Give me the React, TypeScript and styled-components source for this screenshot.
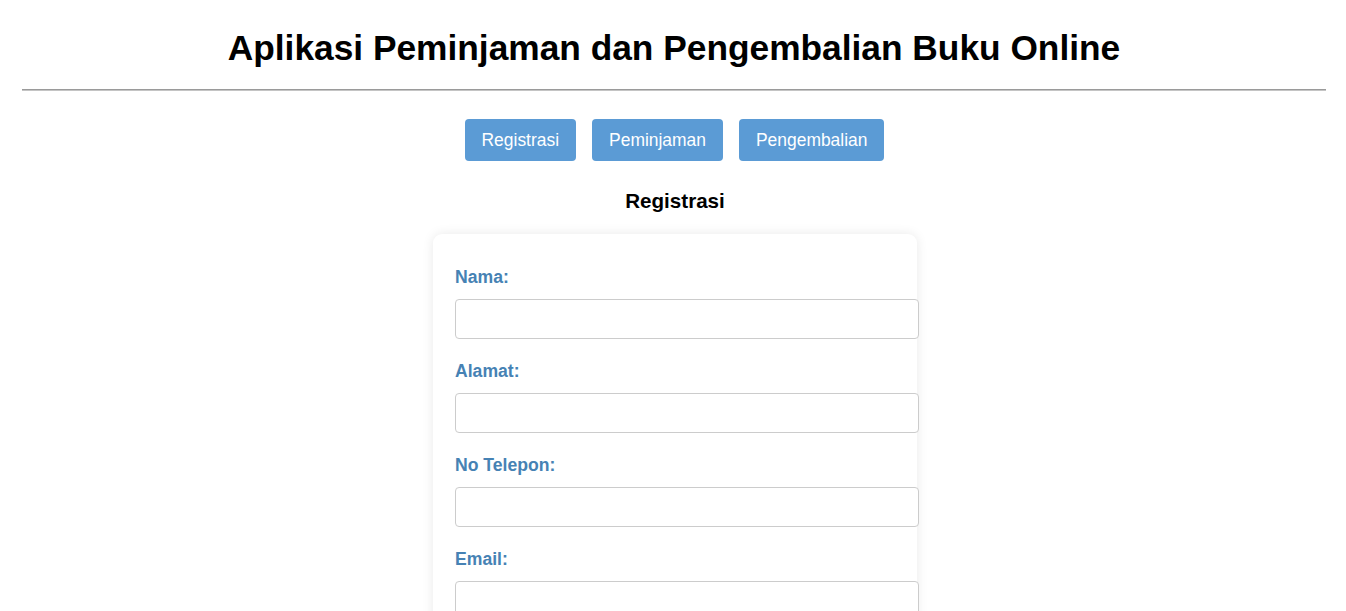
import styled, { createGlobalStyle } from "styled-components";

const GlobalStyle = createGlobalStyle`
  body {
    margin: 0;
    font-family: "Liberation Sans", Arial, sans-serif;
    background: #ffffff;
    color: #000000;
  }
`;

const tabs = ["Registrasi", "Peminjaman", "Pengembalian"];
const fields = [
  { id: "nama", label: "Nama:", type: "text" },
  { id: "alamat", label: "Alamat:", type: "text" },
  { id: "telepon", label: "No Telepon:", type: "tel" },
  { id: "email", label: "Email:", type: "email" },
];

export default function App() {
  return (
    <>
      <GlobalStyle />
      <Page>
        <Title>Aplikasi Peminjaman dan Pengembalian Buku Online</Title>
        <Divider />
        <Nav>
          {tabs.map((tab) => (
            <NavButton key={tab} type="button">
              {tab}
            </NavButton>
          ))}
        </Nav>
        <SectionTitle>Registrasi</SectionTitle>
        <Card>
          <form onSubmit={(e) => e.preventDefault()}>
            {fields.map((field) => (
              <Field key={field.id}>
                <Label htmlFor={field.id}>{field.label}</Label>
                <Input id={field.id} type={field.type} />
              </Field>
            ))}
            <SubmitButton type="submit">Daftar</SubmitButton>
          </form>
        </Card>
      </Page>
    </>
  );
}

const Page = styled.div`
  display: flex;
  flex-direction: column;
  align-items: center;
  padding: 0 20px 40px 22px;
`;

const Title = styled.h1`
  margin: 28px 0 0;
  font-size: 35.3px;
  font-weight: 700;
  line-height: 39px;
  text-align: center;
`;

const Divider = styled.hr`
  align-self: stretch;
  margin: 22px 0 0;
  height: 0;
  border: none;
  border-top: 1px solid #9a9a9a;
  border-bottom: 1px solid #c4c4c4;
`;

const Nav = styled.div`
  display: flex;
  gap: 16px;
  margin-top: 28px;
  padding-left: 1px;
`;

const NavButton = styled.button`
  padding: 11px 17px;
  border: none;
  border-radius: 4px;
  background: #5b9bd5;
  color: #ffffff;
  font-family: inherit;
  font-size: 17.45px;
  line-height: 20px;
  cursor: pointer;
`;

const SectionTitle = styled.h3`
  margin: 28px 0 0;
  padding-left: 2px;
  font-size: 20.6px;
  font-weight: 700;
  line-height: 23px;
`;

const Card = styled.div`
  box-sizing: border-box;
  width: 484px;
  margin-top: 22px;
  margin-left: 2px;
  padding: 33px 22px 22px;
  background: #ffffff;
  border-radius: 9px;
  box-shadow: 0 0 12px rgba(0, 0, 0, 0.09);
`;

const Field = styled.div`
  display: flex;
  flex-direction: column;
  margin-bottom: 22px;
`;

const Label = styled.label`
  margin-bottom: 12px;
  color: #4682b4;
  font-size: 17.6px;
  font-weight: 700;
  line-height: 20px;
`;

const Input = styled.input`
  box-sizing: content-box;
  width: 100%;
  height: 38px;
  padding: 0 11px;
  border: 1px solid #cccccc;
  border-radius: 4px;
  font-family: inherit;
  font-size: 16px;
  outline: none;
`;

const SubmitButton = styled(NavButton)`
  margin-top: 4px;
`;
